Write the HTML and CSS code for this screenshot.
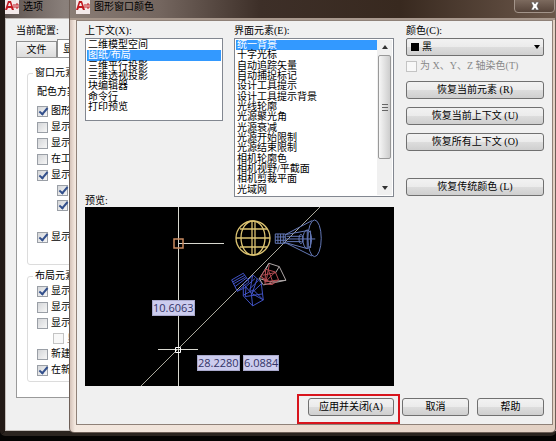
FILE: index.html
```html
<!DOCTYPE html>
<html lang="zh-CN">
<head>
  <meta charset="UTF-8" />
  <meta name="viewport" content="width=device-width, initial-scale=1.0"/>
  <title>图形窗口颜色</title>
  <link rel="stylesheet" href="styles.css">
</head>
<body>

  <!-- Options window -->
  <section class="window options">
    <header class="titlebar">
      <span class="logo"><svg width="14" height="14" viewBox="0 0 14 14"><path d="M0 10 3 1h3l3 9H7L6 8H3l-1 2zM4 3l-1 3h3L5 3z" fill="#c01820" fill-rule="evenodd"/><path d="M9 4v4M11 4h2v4h-2z" fill="none" stroke="#c01820"/></svg></span>
      <span>选项</span>
    </header>
    <div class="options-body">
      <p class="profile">当前配置:</p>
      <div class="tabs">
        <button class="tab">文件</button>
        <button class="tab active">显示</button>
      </div>
      <div class="tab-page">
        <fieldset class="group window-group">
          <legend>窗口元素</legend>
          <p class="scheme">配色方案</p>
          <label class="check"><input type="checkbox" checked>图形</label>
          <label class="check"><input type="checkbox">显示</label>
          <label class="check"><input type="checkbox">显示</label>
          <label class="check"><input type="checkbox">在工</label>
          <label class="check"><input type="checkbox" checked>显示</label>
          <label class="check sub"><input type="checkbox" aria-label="工具提示" checked></label>
          <label class="check sub"><input type="checkbox" aria-label="快捷键" checked></label>
          <label class="check apart"><input type="checkbox" checked>显示</label>
        </fieldset>
        <fieldset class="group layout-group">
          <legend>布局元素</legend>
          <label class="check"><input type="checkbox" checked>显示</label>
          <label class="check"><input type="checkbox">显示</label>
          <label class="check"><input type="checkbox">显示</label>
          <label class="check sub off"><input type="checkbox" disabled>显</label>
          <label class="check"><input type="checkbox">新建</label>
          <label class="check"><input type="checkbox" checked>在新</label>
        </fieldset>
      </div>
    </div>
  </section>

  <!-- Drawing window colors dialog -->
  <section class="window colors">
    <header class="titlebar">
      <span class="logo"><svg width="14" height="14" viewBox="0 0 14 14"><path d="M0 10 3 1h3l3 9H7L6 8H3l-1 2zM4 3l-1 3h3L5 3z" fill="#c01820" fill-rule="evenodd"/><path d="M9 4v4M11 4h2v4h-2z" fill="none" stroke="#c01820"/></svg></span>
      <span>图形窗口颜色</span>
      <button class="close" aria-label="关闭"><svg width="10" height="9" viewBox="0 0 10 9"><path d="M1 0h3l1 2 1-2h3L7 4l2 4H6L5 6 4 8H1l2-4z" fill="#fff" stroke="#444" stroke-width=".6"/></svg></button>
    </header>
    <div class="colors-body">
      <div class="columns">
        <div class="left">
          <div class="lists">
            <div class="field context">
              <span class="caption" id="context">上下文(X):</span>
              <div class="listbox short">
                <ul role="listbox" aria-labelledby="context">
                  <li role="option">二维模型空间</li>
                  <li role="option" aria-selected="true">图纸/布局</li>
                  <li role="option">三维平行投影</li>
                  <li role="option">三维透视投影</li>
                  <li role="option">块编辑器</li>
                  <li role="option">命令行</li>
                  <li role="option">打印预览</li>
                </ul>
              </div>
            </div>
            <div class="field element">
              <span class="caption" id="element">界面元素(E):</span>
              <div class="listbox long">
                <ul role="listbox" aria-labelledby="element">
                  <li role="option" aria-selected="true">统一背景</li>
                  <li role="option">十字光标</li>
                  <li role="option">自动追踪矢量</li>
                  <li role="option">自动捕捉标记</li>
                  <li role="option">设计工具提示</li>
                  <li role="option">设计工具提示背景</li>
                  <li role="option">光线轮廓</li>
                  <li role="option">光源聚光角</li>
                  <li role="option">光源衰减</li>
                  <li role="option">光源开始限制</li>
                  <li role="option">光源结束限制</li>
                  <li role="option">相机轮廓色</li>
                  <li role="option">相机视野/平截面</li>
                  <li role="option">相机剪裁平面</li>
                  <li role="option">光域网</li>
                </ul>
                <div class="scrollbar">
                  <svg width="6" height="4" viewBox="0 0 6 4"><path d="M0 4 3 0l3 4z" fill="#333"/></svg>
                  <div class="thumb"><i></i></div>
                  <svg width="6" height="4" viewBox="0 0 6 4"><path d="M0 0h6L3 4z" fill="#333"/></svg>
                </div>
              </div>
            </div>
          </div>
          <p class="preview-label">预览:</p>
          <div class="preview">
            <svg width="309" height="179" viewBox="0 0 309 179" fill="none">
              <path d="M93.500 0V179M93 36.500H139M73 142.500H113" stroke="#d8d8d0"/>
              <path d="M56 179 235 0" stroke="#aaa99c"/>
              <path d="M89 32h9v9h-9z" stroke="#c98a60" stroke-width="1.500"/>
              <path d="M90.500 140.500h5v5h-5z" stroke="#fff"/>
              <g stroke="#dcc472" stroke-width="1.300">
                <circle cx="168" cy="31" r="17"/>
                <ellipse cx="168" cy="31" rx="12" ry="17"/>
                <path d="M167 14v34M170 14v34M151 31h34M155 22h27M155 40h27"/>
              </g>
              <!-- spot light and cameras -->
              <g transform="translate(135 -7) scale(.333)" stroke-width="3">
                <g stroke="#6478b8">
                  <ellipse cx="284" cy="115" rx="20" ry="55"/>
                  <ellipse cx="262" cy="118" rx="13" ry="28"/>
                  <ellipse cx="243" cy="117" rx="6" ry="14"/>
                  <path d="M166 102h30v28h-30zM174 102v28M182 102v28M190 102v28M166 111h30M166 121h30M196 104l80-42M196 128l80 40M196 104l66-12M196 128l66 18M196 117h90M200 109h45M200 125h45M262 90v56M272 92v52"/>
                </g>
                <g stroke="#4052c4">
                  <path d="M35 240 70 220l10 14-35 26zM38 246l36-20M40 252l36-20M45 260l7 14 35-28-7-12M52 274l26-12"/>
                  <path d="M70 252 100 226l26 24-32 30zM78 260l27-24M88 268l27-26M98 226l-8 48M112 236l-16 46"/>
                  <path d="M70 256v32l28 30 32-18-6-50M94 280l4 38M78 262l-2 28 52-8M94 280l36 20M70 286l30-16 30 30"/>
                </g>
                <path d="M147 190 178 200l20 41-48 4-32-9zM147 190l-10 18M178 200l-12 20M118 236l12 19 68-14" stroke="#b0a8a8"/>
                <path d="M137 208 166 216l10 24-40 6-12-18zM137 208l-2 44 22 2 18-14M128 226l38-8M148 194l-10 52M146 212l14 38M166 216l-30 30M122 230l36 22" stroke="#b44a50"/>
              </g>
            </svg>
            <output class="tip distance">10.6063</output>
            <output class="tip pos-x">28.2280</output>
            <output class="tip pos-y">6.0884</output>
          </div>
        </div>
        <div class="field color">
          <label class="caption" for="color">颜色(C):</label>
          <div class="color-select">
            <select id="color">
              <option>黑</option>
            </select>
            <span class="swatch"></span>
            <svg width="6" height="4" viewBox="0 0 6 4"><path d="M0 0h6L3 4z" fill="#000"/></svg>
          </div>
          <label class="check off"><input type="checkbox" disabled>为 X、Y、Z 轴染色(T)</label>
          <div class="restore">
            <button class="btn">恢复当前元素 (R)</button>
            <button class="btn">恢复当前上下文 (U)</button>
            <button class="btn">恢复所有上下文 (O)</button>
            <button class="btn classic">恢复传统颜色 (L)</button>
          </div>
        </div>
      </div>
      <footer class="actions">
        <div class="marked"><button class="btn">应用并关闭(A)</button></div>
        <button class="btn">取消</button>
        <button class="btn">帮助</button>
      </footer>
    </div>
  </section>

</body>
</html>
```

FILE: styles.css
```css
* {
  box-sizing: border-box;
}

body {
  margin: 0;
  min-height: 100vh;
  overflow: hidden;
  position: relative;
  background: #050403;
  color: #000;
  font: 10px/14px "Liberation Serif", "Noto Sans CJK SC", sans-serif;
}

p, ul {
  margin: 0;
  padding: 0;
}

button, select {
  font: inherit;
  color: inherit;
}

/* windows */
.window {
  position: absolute;
  top: 0;
  right: 0;
}

.titlebar {
  display: flex;
  gap: 4px;
}

.titlebar .logo {
  width: 14px;
  height: 14px;
  background: #f3e9e9;
}

.logo svg {
  display: block;
}

.options {
  left: 0;
  border-left: 5px solid #231b17;
  border-bottom: 5px solid #2b241f;
  border-radius: 0 0 5px 5px;
  background: linear-gradient(90deg, #5e5450, #8a807b 60px, #4a3e39);
}

.options .titlebar {
  height: 18px;
}

.options-body {
  height: 413px;
  padding: 5px 0 0 10px;
  border: 1px solid #c4beba;
  background: #f0f0f0;
}

.profile {
  height: 15px;
}

.tabs {
  display: flex;
  align-items: flex-end;
  height: 18px;
}

.tab {
  width: 41px;
  height: 16px;
  padding: 0;
  border: 1px solid #8e8f8f;
  border-bottom: 0;
  background: linear-gradient(#f4f4f4, #dcdcdc);
}

.tab.active {
  height: 18px;
  padding-left: 5px;
  border-right: 0;
  background: #fff;
  text-align: left;
}

.tab-page {
  height: 341px;
  padding: 8px 10px;
  border: 1px solid #9a9a9a;
  background: #fff;
}

.group {
  margin: 0 0 4px;
  padding: 3px 0 3px 9px;
  border: 1px solid #dcdcdc;
  border-radius: 3px;
}

.group legend {
  margin-left: -4px;
  padding: 0 2px;
}

.window-group {
  height: 199px;
}

.layout-group {
  padding-top: 0;
}

.scheme {
  height: 20px;
  padding-top: 2px;
}

.check {
  display: flex;
  align-items: center;
  gap: 3px;
  height: 16px;
  white-space: nowrap;
}

.check input {
  appearance: none;
  flex: none;
  width: 11px;
  height: 11px;
  margin: 0;
  border: 1px solid #9a9fa6;
  background: linear-gradient(135deg, #d4d6d9, #f6f6f6);
}

.check input:checked::before {
  content: "";
  display: block;
  width: 3px;
  height: 7px;
  margin: -1px 0 0 3px;
  border: solid #33508c;
  border-width: 0 2px 2px 0;
  transform: rotate(40deg);
}

.check.sub {
  height: 15px;
  padding-left: 20px;
}

.check.sub.off {
  padding-left: 16px;
}

.check.apart {
  margin-top: 16px;
}

.check.off {
  color: #888;
}

.check.off input {
  border-color: #c4c4c4;
  background: #f8f8f8;
}

.colors {
  left: 69px;
  padding: 0 2px 7px 6px;
  border: solid #6d5f57;
  border-width: 0 1px 1px;
  border-radius: 0 0 5px 5px;
  background: linear-gradient(90deg, #d4c2b8, #f4e8df 5px, #e2d0c3);
}

.colors .titlebar {
  position: relative;
  height: 20px;
  margin: 0 -2px 0 -6px;
  padding-left: 6px;
  border-bottom: 2px solid #a8988d;
  background: linear-gradient(90deg, #8a7d76, #74665f 90px, #3d2f28 190px, #38291f 330px, #6b574a);
}

.close {
  position: absolute;
  top: -1px;
  right: 0;
  width: 41px;
  height: 14px;
  padding: 0;
  border: 1px solid #a3948a;
  border-radius: 0 0 4px 4px;
  background: linear-gradient(#7c6a5e, #56443a);
}

.close svg {
  display: block;
  margin: auto;
}

.colors-body {
  padding: 3px 8px 0;
  border: 1px solid #8f8178;
  background: #f0f0f0;
}

.columns {
  display: flex;
  gap: 12px;
}

.left {
  flex: 309;
}

.lists {
  display: flex;
  gap: 11px;
}

.context {
  flex: 138;
}

.element {
  flex: 160;
}

.caption {
  display: block;
  height: 14px;
}

.listbox {
  display: flex;
  padding: 1px;
  border: 1px solid #828790;
  background: #fff;
}

.listbox.short {
  height: 83px;
}

.listbox.long {
  height: 159px;
}

.listbox ul {
  flex: 1;
  display: grid;
  grid-auto-rows: 1fr;
  list-style: none;
}

.short ul {
  height: 72px;
}

.listbox li {
  display: flex;
  align-items: center;
  min-height: 0;
  padding-left: 1px;
  line-height: 10px;
}

.listbox [aria-selected] {
  background: #3399ff;
  color: #fff;
}

.scrollbar {
  display: flex;
  flex-direction: column;
  align-items: center;
  width: 15px;
  padding: 5px 1px;
  background: #f0f0f0;
}

.thumb {
  display: flex;
  align-items: center;
  justify-content: center;
  width: 13px;
  height: 104px;
  margin: 6px 0 auto;
  border: 1px solid #999;
  border-radius: 2px;
  background: linear-gradient(90deg, #f6f6f6, #cdcdcd);
}

.thumb i {
  width: 6px;
  height: 7px;
  background: repeating-linear-gradient(#666 0 1px, transparent 1px 3px);
}

.preview-label {
  height: 10px;
  line-height: 8px;
}

.preview {
  position: relative;
  height: 179px;
  background: #000;
}

.preview svg {
  display: block;
}

.tip {
  position: absolute;
  border: 1px solid #a9a9cc;
  background: #ccccee;
  color: #333366;
  font: 11px/14px "Open Sans", sans-serif;
}

.distance {
  left: 67px;
  top: 93px;
}

.pos-x {
  left: 112px;
  top: 148px;
}

.pos-y {
  left: 158px;
  top: 148px;
}

.color {
  flex: 138;
}

.color-select {
  position: relative;
  height: 18px;
  margin-bottom: 2px;
}

.color-select select {
  appearance: none;
  width: 100%;
  height: 18px;
  padding: 0 0 0 15px;
  border: 1px solid #707070;
  border-radius: 2px;
  background: linear-gradient(#f2f2f2, #ebebeb 50%, #dddddd 50%, #d0d0d0);
}

.swatch {
  position: absolute;
  left: 5px;
  top: 5px;
  width: 8px;
  height: 8px;
  background: #000;
}

.color-select svg {
  position: absolute;
  right: 4px;
  top: 7px;
}

.restore {
  display: flex;
  flex-direction: column;
  gap: 8px;
  margin-top: 7px;
}

.btn {
  height: 18px;
  padding: 0;
  border: 1px solid #707070;
  border-radius: 3px;
  background: linear-gradient(#f2f2f2, #ebebeb 50%, #dddddd 50%, #cfcfcf);
  line-height: 14px;
}

.classic {
  margin-top: 19px;
}

.actions {
  display: flex;
  justify-content: flex-end;
  gap: 8px;
  padding-top: 12px;
}

.actions .btn {
  width: 67px;
}

/* red frame round the apply button */
.marked {
  margin: -4px -6px 0 0;
  padding: 2px 4px 6px 9px;
  border: 2px solid #d8141c;
}

.marked .btn {
  width: 86px;
}
```
